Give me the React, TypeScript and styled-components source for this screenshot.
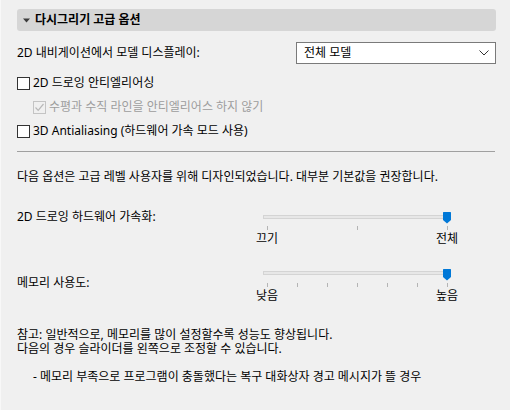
import React from 'react';
import styled, { createGlobalStyle } from 'styled-components';

const GlobalStyle = createGlobalStyle`
  html, body {
    margin: 0;
    padding: 0;
    background: #f0f0f0;
  }
  body {
    font-family: "Noto Sans", "Noto Sans CJK KR", sans-serif;
    font-size: 12px;
    color: #000;
  }
`;

const Wrapper = styled.div`
  width: 510px;
  height: 410px;
  box-sizing: border-box;
  padding: 9px 14px 0 16px;
  border-left: 1px solid #f8f8f8;
  overflow: hidden;
`;

const Header = styled.div`
  height: 22px;
  background: #d6d6d6;
  border-radius: 3px;
  display: flex;
  align-items: center;
  padding-left: 5px;
  gap: 4px;
  font-weight: 700;
  line-height: 16px;
`;

const DisplayRow = styled.div`
  margin-top: 11px;
  display: flex;
  align-items: center;
  justify-content: space-between;
  line-height: 16px;
`;

const Select = styled.div`
  width: 200px;
  height: 22px;
  box-sizing: border-box;
  border: 1px solid #7a7a7a;
  background: #fff;
  display: flex;
  align-items: center;
  justify-content: space-between;
  padding: 0 6px 0 7px;
`;

const CheckRow = styled.label<{ $indent?: boolean; $disabled?: boolean }>`
  height: 24px;
  display: flex;
  align-items: center;
  gap: 3px;
  padding-left: ${(p) => (p.$indent ? '16px' : '0')};
  color: ${(p) => (p.$disabled ? '#9d9d9d' : '#000')};
  line-height: 16px;
`;

const CheckGroup = styled.div`
  margin-top: 7px;
`;

const Box = styled.span<{ $disabled?: boolean }>`
  width: 13px;
  height: 13px;
  box-sizing: border-box;
  border: 1px solid ${(p) => (p.$disabled ? '#c4c4c4' : '#333')};
  background: ${(p) => (p.$disabled ? '#f0f0f0' : '#fff')};
  display: flex;
  align-items: center;
  justify-content: center;
`;

const Divider = styled.hr`
  margin: 8px 1px 0 0;
  border: 0;
  border-top: 1px solid #a0a0a0;
  height: 0;
`;

const Paragraph = styled.p<{ $top: number }>`
  margin: ${(p) => p.$top}px 0 0;
  line-height: 16px;
`;

const Note = styled.p`
  margin: 24px 0 0;
  line-height: 14px;
`;

const Bullet = styled.p`
  margin: 13px 0 0 16px;
  line-height: 16px;
`;

const SliderRow = styled.div<{ $top: number; $labelTop: number }>`
  margin-top: ${(p) => p.$top}px;
  display: grid;
  grid-template-columns: 239px 202px;
  align-items: start;

  & > span {
    line-height: 16px;
    margin-top: ${(p) => p.$labelTop}px;
  }
`;

const SliderBox = styled.div<{ $top: number }>`
  width: 202px;
  margin-top: ${(p) => p.$top}px;
`;

const TrackArea = styled.div`
  position: relative;
  height: 14px;
`;

const Track = styled.div<{ $top: number }>`
  position: absolute;
  left: 7px;
  top: ${(p) => p.$top}px;
  width: 188px;
  height: 4px;
  box-sizing: border-box;
  background: #e7e7e7;
  border: 1px solid #d4d4d4;
`;

const Thumb = styled.svg`
  position: absolute;
  left: 187px;
  top: 0;
`;

const Ticks = styled.div`
  height: 4px;
  display: flex;
  justify-content: space-between;
  padding: 0 10px 0 11px;
`;

const Tick = styled.span`
  width: 1px;
  height: 4px;
  background: #b4b4b4;
`;

const SliderLabels = styled.div`
  margin-top: 1px;
  display: flex;
  justify-content: space-between;
  line-height: 16px;
`;

function Slider({ ticks, left, right, trackTop, top }: { ticks: number; left: string; right: string; trackTop: number; top: number }) {
  return (
    <SliderBox $top={top}>
      <TrackArea>
        <Track $top={trackTop} />
        <Thumb width="8" height="12" viewBox="0 0 8 12">
          <path d="M0 0.5 Q0 0 0.5 0 H7.5 Q8 0 8 0.5 V8 L4 11.5 L0 8 Z" fill="#0078d7" />
        </Thumb>
      </TrackArea>
      <Ticks>
        {Array.from({ length: ticks }).map((_, i) => (
          <Tick key={i} />
        ))}
      </Ticks>
      <SliderLabels>
        <span>{left}</span>
        <span>{right}</span>
      </SliderLabels>
    </SliderBox>
  );
}

function App() {
  return (
    <>
      <GlobalStyle />
      <Wrapper>
        <Header>
          <svg width="9" height="5" viewBox="0 0 9 5">
            <path d="M1 0.5 H8 L4.5 4.5 Z" fill="#3c3c3c" />
          </svg>
          다시그리기 고급 옵션
        </Header>
        <DisplayRow>
          <span>2D 내비게이션에서 모델 디스플레이:</span>
          <Select>
            <span>전체 모델</span>
            <svg width="10" height="6" viewBox="0 0 10 6">
              <path d="M0.5 0.5 L5 5 L9.5 0.5" fill="none" stroke="#333" strokeWidth="1" />
            </svg>
          </Select>
        </DisplayRow>
        <CheckGroup>
          <CheckRow>
            <Box />
            2D 드로잉 안티엘리어싱
          </CheckRow>
          <CheckRow $indent $disabled>
            <Box $disabled>
              <svg width="11" height="11" viewBox="0 0 11 11">
                <path d="M1.5 5.5 L4.2 8.3 L9.5 2" fill="none" stroke="#b8b8b8" strokeWidth="1.2" />
              </svg>
            </Box>
            수평과 수직 라인을 안티엘리어스 하지 않기
          </CheckRow>
          <CheckRow>
            <Box />
            3D Antialiasing (하드웨어 가속 모드 사용)
          </CheckRow>
        </CheckGroup>
        <Divider />
        <Paragraph $top={17}>
          다음 옵션은 고급 레벨 사용자를 위해 디자인되었습니다. 대부분 기본값을 권장합니다.
        </Paragraph>
        <SliderRow $top={24} $labelTop={0}>
          <span>2D 드로잉 하드웨어 가속화:</span>
          <Slider top={3} ticks={3} left="끄기" right="전체" trackTop={3} />
        </SliderRow>
        <SliderRow $top={22} $labelTop={6}>
          <span>메모리 사용도:</span>
          <Slider top={0} ticks={7} left="낮음" right="높음" trackTop={2} />
        </SliderRow>
        <Note>
          참고: 일반적으로, 메모리를 많이 설정할수록 성능도 향상됩니다.
          <br />
          다음의 경우 슬라이더를 왼쪽으로 조정할 수 있습니다.
        </Note>
        <Bullet>- 메모리 부족으로 프로그램이 충돌했다는 복구 대화상자 경고 메시지가 뜰 경우</Bullet>
      </Wrapper>
    </>
  );
}

export default App;
